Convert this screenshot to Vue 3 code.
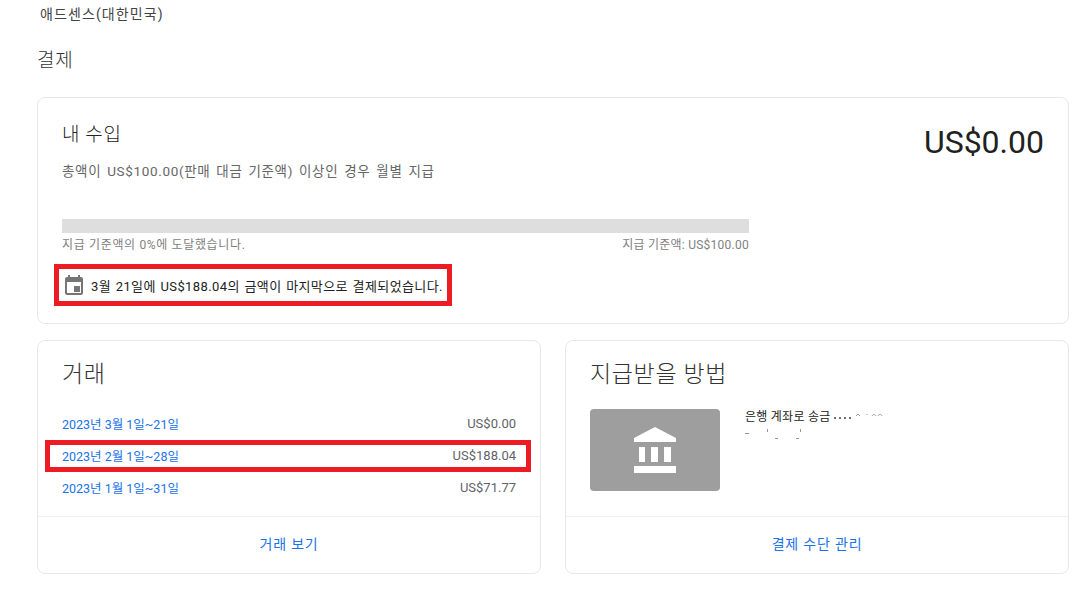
<template>
  <div class="page">
    <div class="brand">애드센스(대한민국)</div>
    <h1 class="page-title">결제</h1>

    <section class="card earnings">
      <div class="earnings-top">
        <div>
          <h2 class="earnings-title">내 수입</h2>
          <p class="earnings-note">총액이 US$100.00(판매 대금 기준액) 이상인 경우 월별 지급</p>
        </div>
        <div class="balance">US$0.00</div>
      </div>
      <div class="progress-wrap">
        <div class="progress"></div>
        <div class="progress-labels">
          <span class="reached">지급 기준액의 0%에 도달했습니다.</span>
          <span>지급 기준액: US$100.00</span>
        </div>
      </div>
      <div class="last-payment">
        <svg class="calendar" width="24" height="24" viewBox="0 0 24 24">
          <path fill="#757575" d="M19 4h-1V2h-2v2H8V2H6v2H5c-1.100 0-2 .9-2 2v14c0 1.100.9 2 2 2h14c1.100 0 2-.9 2-2V6c0-1.100-.9-2-2-2zm0 16H5V9h14v11zm-7-7h6v6h-6z" />
        </svg>
        <span>3월 21일에 US$188.04의 금액이 마지막으로 결제되었습니다.</span>
      </div>
    </section>

    <div class="columns">
      <section class="card panel">
        <h2 class="panel-title">거래</h2>
        <div class="rows">
          <div v-for="row in rows" :key="row.period" class="row" :class="{ marked: row.marked }">
            <a class="row-link">{{ row.period }}</a>
            <span class="row-amount">{{ row.amount }}</span>
          </div>
        </div>
        <div class="panel-footer"><a>거래 보기</a></div>
      </section>

      <section class="card panel">
        <h2 class="panel-title">지급받을 방법</h2>
        <div class="method">
          <div class="bank-tile">
            <svg width="42" height="46" viewBox="0 0 42 46">
              <path fill="#fff" d="M21 0 0 11v4h42v-4zM5 20h6v15H5zM17 20h7v15h-7zM30 20h7v15h-7zM0 39h42v7H0z" />
            </svg>
          </div>
          <div class="method-text">
            <div class="method-line">
              <span>은행 계좌로 송금</span>
              <span class="dots"><i></i><i></i><i></i><i></i></span>
              <!-- 원본에서 가려진 계좌번호의 남은 조각 -->
              <svg class="digit-scraps" width="28" height="6" viewBox="0 0 28 6">
                <path fill="none" stroke="#999" d="M1 4 3 2l2 2M12 2v1M17 4c1-2 3-2 4 0M23 4c1-2 3-2 4 0" />
              </svg>
            </div>
            <div class="scraps">
              <i class="s1"></i><i class="s2"></i><i class="s3"></i><i class="s4"></i><i class="s5"></i>
            </div>
          </div>
        </div>
        <div class="panel-footer"><a>결제 수단 관리</a></div>
      </section>
    </div>
  </div>
</template>

<script setup>
const rows = [
  { period: '2023년 3월 1일~21일', amount: 'US$0.00' },
  { period: '2023년 2월 1일~28일', amount: 'US$188.04', marked: true },
  { period: '2023년 1월 1일~31일', amount: 'US$71.77' }
]
</script>

<style>
html,
body {
  background: #fff;
}
</style>

<style scoped>
.page {
  width: 1086px;
  height: 593px;
  overflow: hidden;
  box-sizing: border-box;
  padding: 5px 17px 0 37px;
  background: #fff;
  color: #212121;
  font-family: Roboto, 'Noto Sans CJK KR', sans-serif;
}
.brand {
  padding-left: 3px;
  font-size: 14px;
  line-height: 18px;
  letter-spacing: 1.100px;
  color: #444;
}
.page-title {
  margin: 26px 0 0;
  font-size: 19px;
  line-height: 24px;
  font-weight: 300;
  letter-spacing: 0.800px;
  color: #333;
}
.card {
  box-sizing: border-box;
  border: 1px solid #e8e8e8;
  border-radius: 8px;
  background: #fff;
}
.earnings {
  height: 227px;
  margin-top: 24px;
  padding: 24px 24px 0;
}
.earnings-top {
  display: flex;
  justify-content: space-between;
  height: 97px;
}
.earnings-title {
  margin: 1px 0 0;
  font-size: 19px;
  line-height: 24px;
  font-weight: 300;
  letter-spacing: 0.600px;
  color: #222;
}
.earnings-note {
  margin: 14px 0 0;
  font-size: 13.500px;
  line-height: 20px;
  letter-spacing: 0.650px;
  word-spacing: 2px;
  color: #666;
}
.balance {
  font-size: 32px;
  line-height: 40px;
  color: #212121;
}
.progress-wrap {
  width: 687px;
}
.progress {
  height: 14px;
  background: #dedede;
}
.progress-labels {
  display: flex;
  justify-content: space-between;
  margin-top: 3px;
  font-size: 12px;
  line-height: 18px;
  letter-spacing: 0.250px;
  color: #808080;
}
.reached {
  letter-spacing: 0.650px;
}
.last-payment {
  display: flex;
  align-items: center;
  gap: 5px;
  box-sizing: border-box;
  width: 398px;
  height: 42px;
  margin: 10px 0 0 -8px;
  padding-left: 3px;
  border: 5px solid #ed1c24;
  font-size: 13px;
  letter-spacing: 0.400px;
  word-spacing: 1px;
  color: #222;
  white-space: nowrap;
}
.calendar {
  flex: none;
}
.columns {
  display: grid;
  grid-template-columns: 504px 504px;
  gap: 24px;
  margin-top: 16px;
}
.panel {
  display: flex;
  flex-direction: column;
  height: 234px;
}
.panel-title {
  margin: 0;
  padding: 17px 24px 0;
  font-size: 23px;
  line-height: 34px;
  font-weight: 300;
  letter-spacing: 0.650px;
  color: #333;
}
.rows {
  margin-top: 16px;
  padding: 0 24px;
}
.row {
  position: relative;
  display: flex;
  align-items: center;
  justify-content: space-between;
  box-sizing: border-box;
  height: 32px;
  padding-bottom: 2px;
}
.row.marked::after {
  content: '';
  position: absolute;
  inset: 0 -15px 0 -17px;
  border: 5px solid #ed1c24;
}
.row-link {
  font-size: 12.500px;
  color: #1a73e8;
}
.row-amount {
  font-size: 13px;
  color: #5f6368;
}
.panel-footer {
  display: flex;
  align-items: center;
  justify-content: center;
  box-sizing: border-box;
  height: 57px;
  margin-top: auto;
  padding-bottom: 5px;
  border-top: 1px solid #f0f0f0;
  font-size: 14px;
  letter-spacing: 0.800px;
  color: #1a73e8;
}
.method {
  display: flex;
  gap: 25px;
  margin-top: 17px;
  padding: 0 24px;
}
.bank-tile {
  display: flex;
  align-items: center;
  justify-content: center;
  flex: none;
  width: 130px;
  height: 82px;
  border-radius: 4px;
  background: #9e9e9e;
}
.method-line {
  display: flex;
  align-items: center;
  font-size: 12px;
  line-height: 16px;
  letter-spacing: 0.250px;
  color: #222;
  white-space: nowrap;
}
.dots {
  display: flex;
  gap: 3px;
  margin: 1px 0 0 4px;
}
.dots i {
  width: 2px;
  height: 2px;
  border-radius: 50%;
  background: #444;
}
.digit-scraps {
  margin: -4px 0 0 4px;
}
.scraps {
  position: relative;
  height: 16px;
  margin-top: 2px;
}
.scraps i {
  position: absolute;
  background: #999;
}
.s1 { left: 0; top: 6px; width: 4px; height: 1px; }
.s2 { left: 22px; top: 2px; width: 1px; height: 3px; }
.s3 { left: 30px; top: 11px; width: 3px; height: 1px; }
.s4 { left: 55px; top: 2px; width: 1px; height: 3px; }
.s5 { left: 51px; top: 11px; width: 3px; height: 1px; }
</style>
